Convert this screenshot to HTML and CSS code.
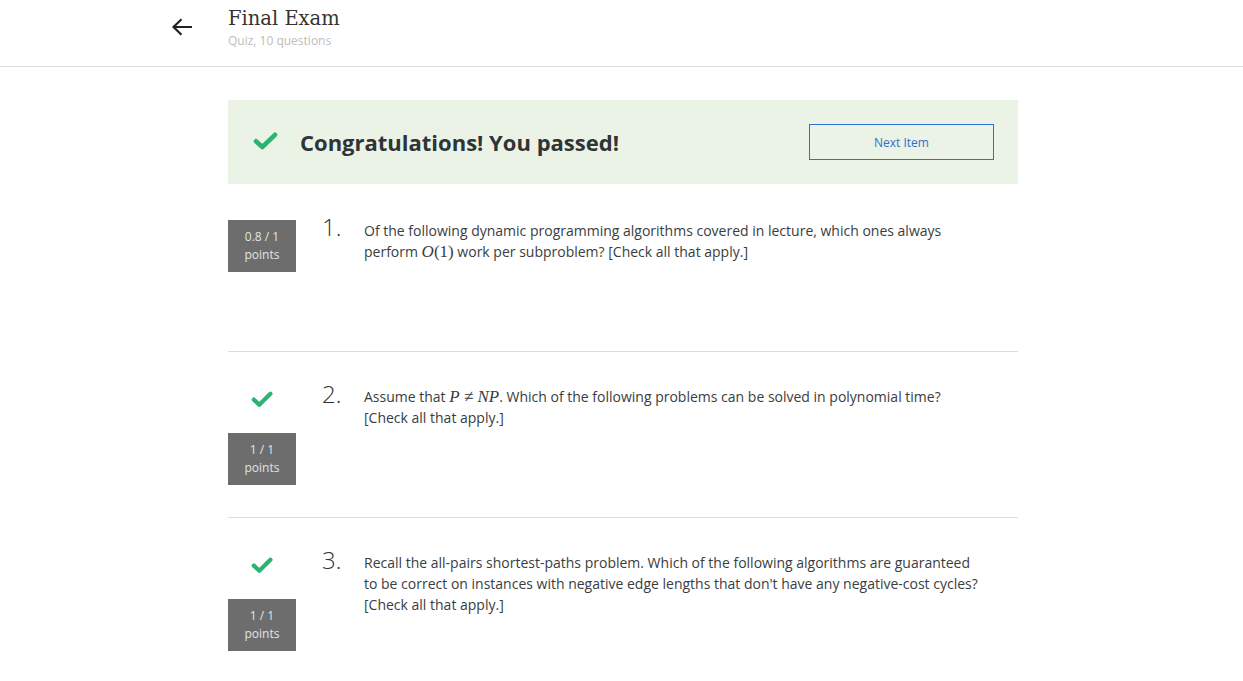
FILE: index.html
```html
<!DOCTYPE html>
<html lang="en">
<head>
<meta charset="utf-8">
<title>Final Exam</title>
<link rel="stylesheet" href="styles.css">
</head>
<body>
<header class="header">
  <div class="header-inner">
    <a class="back" href="#" aria-label="Back">
      <svg width="22" height="18" viewBox="0 0 22 18"><path d="M21 9H2.5M10.5 1.2L2.5 9l8 7.8" fill="none" stroke="#222" stroke-width="2.2"/></svg>
    </a>
    <div class="titles">
      <h1 class="title">Final Exam</h1>
      <div class="subtitle">Quiz, 10 questions</div>
    </div>
  </div>
</header>

<main class="main">
  <section class="banner">
    <svg class="banner-check" width="25" height="18" viewBox="0 0 25 18"><path d="M3 9.2l6.3 5.8L22 2.8" fill="none" stroke="#2bb470" stroke-width="4.6" stroke-linecap="round" stroke-linejoin="round"/></svg>
    <div class="banner-text">Congratulations! You passed!</div>
    <button class="next-btn">Next Item</button>
  </section>

  <section class="question q-first">
    <div class="q-side">
      <div class="points">0.8 / 1<br>points</div>
    </div>
    <div class="q-num">1.</div>
    <div class="q-text">Of the following dynamic programming algorithms covered in lecture, which ones always perform <span class="math"><span class="mi">O</span>(1)</span> work per subproblem? [Check all that apply.]</div>
  </section>

  <section class="question">
    <div class="q-side">
      <svg class="q-check" width="22" height="17" viewBox="0 0 22 17"><path d="M2.8 8.6l5.5 5.2L19.4 2.8" fill="none" stroke="#2bb470" stroke-width="4.2" stroke-linecap="round" stroke-linejoin="round"/></svg>
      <div class="points">1 / 1<br>points</div>
    </div>
    <div class="q-num">2.</div>
    <div class="q-text">Assume that <span class="math"><span class="mi">P</span> ≠ <span class="mi">NP</span></span>. Which of the following problems can be solved in polynomial time? [Check all that apply.]</div>
  </section>

  <section class="question">
    <div class="q-side">
      <svg class="q-check" width="22" height="17" viewBox="0 0 22 17"><path d="M2.8 8.6l5.5 5.2L19.4 2.8" fill="none" stroke="#2bb470" stroke-width="4.2" stroke-linecap="round" stroke-linejoin="round"/></svg>
      <div class="points">1 / 1<br>points</div>
    </div>
    <div class="q-num">3.</div>
    <div class="q-text">Recall the all-pairs shortest-paths problem. Which of the following algorithms are guaranteed to be correct on instances with negative edge lengths that don't have any negative-cost cycles? [Check all that apply.]</div>
  </section>
</main>
</body>
</html>
```

FILE: styles.css
```css
* { box-sizing: border-box; }

html, body {
  margin: 0;
  padding: 0;
  background: #fff;
}

body {
  font-family: "Open Sans", "Liberation Sans", sans-serif;
  color: #373a3c;
}

.header {
  height: 67px;
  border-bottom: 1px solid #dcdcdc;
}

.header-inner {
  margin-left: 171px;
  display: flex;
  align-items: flex-start;
}

.back {
  display: block;
  width: 22px;
  height: 18px;
  margin-top: 18px;
  margin-right: 35px;
}

.back svg { display: block; }

.titles {
  padding-top: 5px;
}

.title {
  margin: 0;
  font-family: "DejaVu Serif", "Liberation Serif", serif;
  font-weight: normal;
  font-size: 19.5px;
  line-height: 28px;
  color: #333;
}

.subtitle {
  font-size: 12px;
  line-height: 16px;
  color: #bdbdbd;
}

.main {
  width: 790px;
  margin-left: 228px;
  padding-top: 33px;
}

.banner {
  height: 84px;
  background: #ebf3e6;
  display: flex;
  align-items: center;
  padding: 0 24px 0 25px;
}

.banner-check {
  display: block;
  flex: none;
  margin-top: -2px;
}

.banner-text {
  margin-left: 22px;
  font-size: 22px;
  font-weight: 700;
  color: #2f3437;
  flex: 1;
}

.next-btn {
  width: 185px;
  height: 36px;
  border: 1px solid #2c72cc;
  background: transparent;
  color: #2c72cc;
  font-family: "Open Sans", "Liberation Sans", sans-serif;
  font-size: 12px;
  padding: 0;
}

.question {
  display: flex;
  align-items: flex-start;
  padding: 35px 0 32px;
  border-bottom: 1px solid #dcdcdc;
}

.question:last-child {
  border-bottom: none;
}

.q-first {
  padding-top: 36px;
  min-height: 168px;
}

.q-side {
  width: 68px;
  flex: none;
  display: flex;
  flex-direction: column;
  align-items: center;
}

.q-check {
  display: block;
  margin-top: 4px;
  margin-bottom: 25px;
}

.points {
  width: 68px;
  height: 52px;
  background: #6d6d6d;
  color: #e4e4e4;
  font-size: 12px;
  line-height: 18px;
  text-align: center;
  padding-top: 8px;
}

.q-num {
  width: 42px;
  flex: none;
  margin-left: 26px;
  margin-top: -3px;
  font-size: 24px;
  font-weight: 300;
  line-height: 20px;
  color: #333;
}

.q-text {
  width: 620px;
  font-size: 14px;
  line-height: 21px;
  color: #3a3d40;
}

.question:not(.q-first) .q-text {
  margin-top: -1px;
}

.math {
  font-family: "Liberation Serif", "DejaVu Serif", serif;
  font-size: 17px;
  line-height: 1;
}

.mi {
  font-style: italic;
}
```
